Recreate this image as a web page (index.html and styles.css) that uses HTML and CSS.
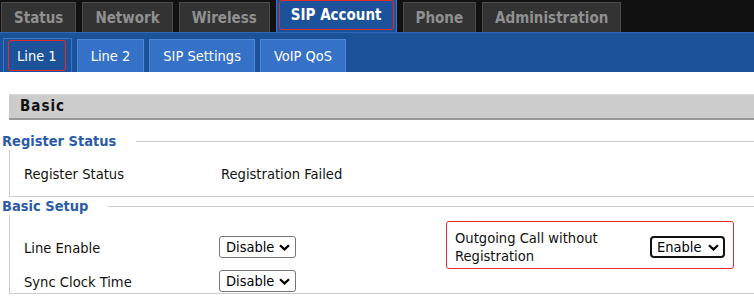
FILE: index.html
```html
<!DOCTYPE html>
<html lang="en">
<head>
<meta charset="UTF-8" />
<meta name="viewport" content="width=device-width, initial-scale=1" />
<title>SIP Account - Line 1</title>
<link rel="stylesheet" href="styles.css">
</head>
<body>
<div class="topnav">
  <a class="tab">Status</a>
  <a class="tab">Network</a>
  <a class="tab">Wireless</a>
  <a class="tab active"><span class="mark">SIP Account</span></a>
  <a class="tab">Phone</a>
  <a class="tab">Administration</a>
</div>
<div class="subnav">
  <a class="subtab active"><span class="mark">Line 1</span></a>
  <a class="subtab">Line 2</a>
  <a class="subtab">SIP Settings</a>
  <a class="subtab">VoIP QoS</a>
</div>

<div class="content">
  <div class="section-title">Basic</div>

  <fieldset class="group">
    <legend>Register Status</legend>
    <div class="status-row">
      <span>Register Status</span>
      <span>Registration Failed</span>
    </div>
  </fieldset>

  <fieldset class="group">
    <legend>Basic Setup</legend>
    <div class="setup-grid">
      <label class="first">Line Enable</label>
      <span class="select first">
        <select><option>Disable</option><option>Enable</option></select>
        <svg width="11" height="7" viewBox="0 0 11 7"><path d="M1 1.2 L5.5 5.4 L10 1.2" fill="none" stroke="#000" stroke-width="2.2"/></svg>
      </span>
      <div class="highlight">
        <label>Outgoing Call without Registration</label>
        <span class="select focused">
          <select><option>Enable</option><option>Disable</option></select>
          <svg width="11" height="7" viewBox="0 0 11 7"><path d="M1 1.2 L5.5 5.4 L10 1.2" fill="none" stroke="#000" stroke-width="2.2"/></svg>
        </span>
      </div>
      <label>Sync Clock Time</label>
      <span class="select">
        <select><option>Disable</option><option>Enable</option></select>
        <svg width="11" height="7" viewBox="0 0 11 7"><path d="M1 1.2 L5.5 5.4 L10 1.2" fill="none" stroke="#000" stroke-width="2.2"/></svg>
      </span>
    </div>
  </fieldset>
</div>
</body>
</html>
```

FILE: styles.css
```css
body { margin: 0; font-family: "DejaVu Sans Condensed", "DejaVu Sans", sans-serif; font-size: 14.6px; color: #111; background: #fff; }

/* main menu */
.topnav { background: #111; height: 32px; display: flex; align-items: flex-end; gap: 6px; padding-left: 1px; }
.topnav .tab { box-sizing: border-box; height: 30px; display: flex; align-items: center; padding: 0 12px; background: #333; border: 1px solid #4b4b4b; border-bottom: none; color: #909090; font-weight: bold; font-size: 15px; }
.topnav .tab.active { height: 32px; padding: 0 2px 2px; background: #1c5299; border: 1px solid #3b74c4; border-top: none; border-bottom: none; color: #fff; }
.topnav .tab.active .mark { height: 100%; box-sizing: border-box; display: flex; align-items: center; padding: 0 11px; border: 1px solid #e42a2a; border-radius: 3px; }

/* sub menu */
.subnav { box-sizing: border-box; height: 40px; display: flex; align-items: flex-end; gap: 5px; padding-left: 3px; background: #1c5299; border-top: 1px solid #2e68b8; }
.subtab { box-sizing: border-box; height: 33px; display: flex; align-items: center; padding: 0 13px; background: #3571c6; border: 1px solid #4d87d6; border-bottom: none; color: #fff; font-size: 14.5px; }
.subtab.active { height: 34px; padding: 1px 5px 1px 4px; background: #1c5299; border-color: #3c77c7; }
.subtab.active .mark { height: 100%; box-sizing: border-box; display: flex; align-items: center; padding: 0 8px; border: 1px solid #e42a2a; border-radius: 3px; }

/* page body */
.content { padding: 22px 0 0 9px; }
.section-title { box-sizing: border-box; height: 26px; line-height: 23px; padding-left: 11px; background: #ccc; border-top: 1px solid #d9d9d9; border-bottom: 2px solid #999; font-weight: bold; font-size: 15px; letter-spacing: 1px; color: #111; }

.group { margin: 0; padding: 0 0 0 14px; min-width: 0; border: 1px solid #ccc; border-right: none; }
.group:first-of-type { margin-top: 12px; }
.group legend { margin-left: -22px; padding: 0 20px 0 0; line-height: 18px; font-weight: bold; font-size: 14.5px; color: #2b5ca8; }

.status-row { display: grid; grid-template-columns: 197px auto; align-items: center; height: 24px; padding: 11px 0; }

.setup-grid { display: grid; grid-template-columns: 195px 227px auto; grid-template-rows: 48px 24px; align-items: center; padding-top: 6px; }
.setup-grid .first { margin-top: 4px; }
.highlight { grid-row: 1; grid-column: 3; box-sizing: border-box; width: 288px; height: 48px; display: flex; align-items: center; padding: 4px 8px 0; border: 1px solid #e42a2a; border-radius: 3px; }
.highlight label { width: 195px; line-height: 18px; }

.select { position: relative; display: inline-block; width: 77px; height: 22px; }
.select select { appearance: none; -webkit-appearance: none; box-sizing: border-box; width: 100%; height: 22px; margin: 0; padding: 0 0 0 6px; font: inherit; font-size: 14.5px; color: #000; background: #fff; border: 1px solid #767676; border-radius: 3px; }
.select svg { position: absolute; right: 6px; top: 8px; pointer-events: none; }
.select.focused { width: 75px; }
.select.focused select { border: 2px solid #111; border-radius: 4px; padding-left: 5px; }
```
